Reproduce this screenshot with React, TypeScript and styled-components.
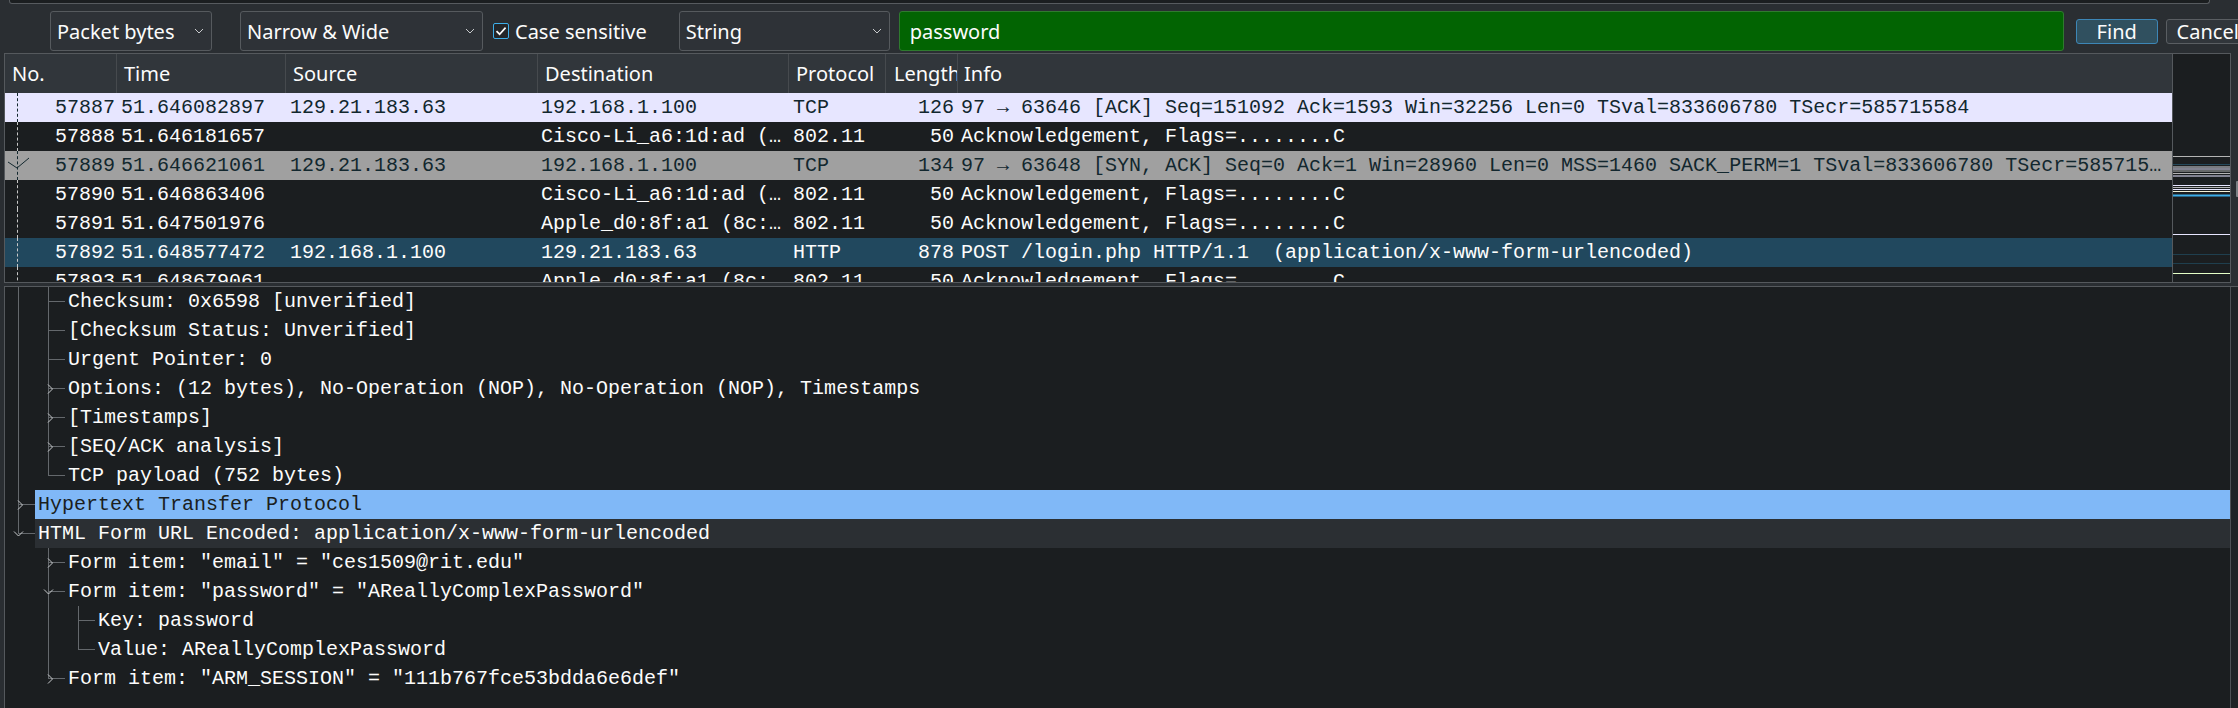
import React from 'react';
import styled, { createGlobalStyle } from 'styled-components';

const UI = `"Noto Sans", "Open Sans", sans-serif`;
const MONO = `"Liberation Mono", "DejaVu Sans Mono", monospace`;

const Global = createGlobalStyle`
  *, *::before, *::after { box-sizing: border-box; }
  html, body { margin: 0; padding: 0; background: #2a2e32; }
  body { width: 2238px; height: 708px; overflow: hidden; }
`;

const Window = styled.div`
  width: 2238px;
  height: 708px;
  overflow: hidden;
  background: #2a2e32;
  display: flex;
  flex-direction: column;
  font-family: ${UI};
  color: #fcfcfc;
`;

const FilterStub = styled.div`
  flex: none;
  height: 4px;
  margin: 0 28px 0 9px;
  background: #1b1e20;
  border: 1px solid #575b5f;
  border-top: none;
  border-radius: 0 0 3px 3px;
`;

const Toolbar = styled.div`
  flex: none;
  height: 49px;
  padding: 7px 0 2px;
  display: flex;
  align-items: center;
  white-space: nowrap;
`;

const Combo = styled.div<{ $w: number; $ml: number }>`
  flex: none;
  width: ${p => p.$w}px;
  margin-left: ${p => p.$ml}px;
  height: 40px;
  border: 1px solid #565a5e;
  border-radius: 3px;
  background: #2e3237;
  display: flex;
  align-items: center;
  padding-left: 6px;
  font-size: 20px;
`;

const ComboArrow = styled.svg`
  margin-left: auto;
  margin-right: 7px;
  width: 10px;
  height: 6px;
`;

const CheckBox = styled.div`
  flex: none;
  margin-left: 10px;
  width: 16px;
  height: 16px;
  border: 1px solid #3daee9;
  border-radius: 2px;
  background: #232629;
  display: flex;
  align-items: center;
  justify-content: center;
`;

const CheckLabel = styled.span`
  margin-left: 6px;
  font-size: 20px;
`;

const SearchField = styled.div`
  flex: none;
  width: 1165px;
  margin-left: 9px;
  height: 40px;
  background: #026402;
  border: 1px solid #2f7a2f;
  border-radius: 3px;
  padding-left: 10px;
  display: flex;
  align-items: center;
  font-size: 20px;
`;

const Button = styled.div<{ $w: number; $ml: number; $primary?: boolean }>`
  flex: none;
  width: ${p => p.$w}px;
  margin-left: ${p => p.$ml}px;
  height: 25px;
  line-height: 23px;
  font-size: 20px;
  text-align: center;
  border-radius: 3px;
  border: 1px solid ${p => (p.$primary ? '#3d86b6' : '#5a5e62')};
  background: ${p => (p.$primary ? '#30505f' : '#31363b')};
`;

const ListArea = styled.div`
  flex: none;
  display: flex;
  height: 230px;
  padding-left: 4px;
`;

const ListPane = styled.div`
  flex: 1;
  min-width: 0;
  display: flex;
  border: 1px solid #55595d;
  background: #1b1e20;
`;

const VScroll = styled.div`
  flex: none;
  width: 7px;
  padding: 128px 0 0 5px;
`;

const VHandle = styled.div`
  width: 2px;
  height: 16px;
  background: #7c8084;
  border-radius: 1px 0 0 1px;
`;

const Table = styled.div`
  flex: 1;
  min-width: 0;
  display: flex;
  flex-direction: column;
  overflow: hidden;
`;

const HeaderRow = styled.div`
  flex: none;
  height: 39px;
  display: flex;
  background: #31363b;
`;

const HeaderCell = styled.div<{ $w?: number; $pl?: number }>`
  ${p => (p.$w ? `width: ${p.$w}px; flex: none; border-right: 1px solid #464a4e;` : 'flex: 1;')}
  padding-left: ${p => p.$pl ?? 7}px;
  font-size: 20px;
  line-height: 39px;
  white-space: nowrap;
  overflow: hidden;
`;

const PacketRow = styled.div<{ $bg: string; $fg: string }>`
  flex: none;
  height: 29px;
  display: flex;
  background: ${p => p.$bg};
  color: ${p => p.$fg};
  font-family: ${MONO};
  font-size: 20px;
  line-height: 29px;
`;

const Cell = styled.div<{ $w?: number; $right?: boolean; $pl?: number; $pr?: number }>`
  ${p => (p.$w ? `width: ${p.$w}px; flex: none;` : 'flex: 1; min-width: 0;')}
  padding: 0 ${p => p.$pr ?? 4}px 0 ${p => p.$pl ?? 4}px;
  text-align: ${p => (p.$right ? 'right' : 'left')};
  white-space: pre;
  overflow: hidden;
  text-overflow: ellipsis;
  position: relative;
`;

const Related = styled.span<{ $c: string }>`
  position: absolute;
  left: 12px;
  top: 0;
  bottom: 0;
  border-left: 1px dashed ${p => p.$c};
`;

const AckMark = styled.svg`
  position: absolute;
  left: 2px;
  top: 5px;
  width: 24px;
  height: 16px;
`;

const Minimap = styled.div`
  flex: none;
  width: 58px;
  border-left: 1px solid #55595d;
  background: #1b1e20;
`;

const DetailPane = styled.div`
  flex: 1;
  min-height: 0;
  margin: 3px 0 0 4px;
  display: flex;
  border-top: 1px solid #55595d;
  border-left: 1px solid #55595d;
  background: #1b1e20;
`;

const DetailBody = styled.div`
  flex: 1;
  min-width: 0;
  display: flex;
  flex-direction: column;
  overflow: hidden;
`;

const DetailScroll = styled.div`
  flex: none;
  width: 8px;
  border-left: 1px solid #4d5155;
  background: #1f2326;
`;

const TreeRow = styled.div`
  flex: none;
  height: 29px;
  display: flex;
  font-family: ${MONO};
  font-size: 20px;
  line-height: 29px;
`;

const Guide = styled.div<{ $on: boolean }>`
  flex: none;
  width: 30px;
  position: relative;
  &::before {
    content: '';
    display: ${p => (p.$on ? 'block' : 'none')};
    position: absolute;
    left: 13px;
    top: 0;
    bottom: 0;
    border-left: 1px solid #64686c;
  }
`;

const Branch = styled.div<{ $last: boolean }>`
  flex: none;
  width: 30px;
  position: relative;
  &::before {
    content: '';
    position: absolute;
    left: 13px;
    top: 0;
    height: ${p => (p.$last ? '15px' : '29px')};
    border-left: 1px solid #64686c;
  }
  &::after {
    content: '';
    position: absolute;
    left: 13px;
    right: 0;
    top: 14px;
    border-top: 1px solid #64686c;
  }
`;

const Expander = styled.svg<{ $open: boolean }>`
  position: absolute;
  z-index: 1;
  left: ${p => (p.$open ? '8px' : '12px')};
  top: ${p => (p.$open ? '12px' : '10px')};
  width: ${p => (p.$open ? '11px' : '7px')};
  height: ${p => (p.$open ? '6px' : '10px')};
`;

const Label = styled.div<{ $bg: string; $fg: string }>`
  flex: 1;
  min-width: 0;
  padding-left: 3px;
  background: ${p => p.$bg};
  color: ${p => p.$fg};
  white-space: pre;
  overflow: hidden;
`;

const COLS = [112, 169, 252, 251, 97, 72];

type Packet = {
  no: string;
  time: string;
  src: string;
  dst: string;
  proto: string;
  len: string;
  info: string;
  bg: string;
  fg: string;
  rel: string;
  ack?: boolean;
};

const LIGHT = '#fcfcfc';
const DARK = '#12272e';
const CISCO = 'Cisco-Li_a6:1d:ad (c0:c1:c0:a6:1d:ad) (RA)';
const APPLE = 'Apple_d0:8f:a1 (8c:85:90:d0:8f:a1) (RA)';
const ACKI = 'Acknowledgement, Flags=........C';

const packets: Packet[] = [
  { no: '57887', time: '51.646082897', src: '129.21.183.63', dst: '192.168.1.100', proto: 'TCP', len: '126', info: '97 → 63646 [ACK] Seq=151092 Ack=1593 Win=32256 Len=0 TSval=833606780 TSecr=585715584', bg: '#e7e6ff', fg: DARK, rel: DARK },
  { no: '57888', time: '51.646181657', src: '', dst: CISCO, proto: '802.11', len: '50', info: ACKI, bg: '#1b1e20', fg: LIGHT, rel: '#c8c8c8' },
  { no: '57889', time: '51.646621061', src: '129.21.183.63', dst: '192.168.1.100', proto: 'TCP', len: '134', info: '97 → 63648 [SYN, ACK] Seq=0 Ack=1 Win=28960 Len=0 MSS=1460 SACK_PERM=1 TSval=833606780 TSecr=585715584 WS=128', bg: '#a0a0a0', fg: DARK, rel: DARK, ack: true },
  { no: '57890', time: '51.646863406', src: '', dst: CISCO, proto: '802.11', len: '50', info: ACKI, bg: '#1b1e20', fg: LIGHT, rel: '#c8c8c8' },
  { no: '57891', time: '51.647501976', src: '', dst: APPLE, proto: '802.11', len: '50', info: ACKI, bg: '#1b1e20', fg: LIGHT, rel: '#c8c8c8' },
  { no: '57892', time: '51.648577472', src: '192.168.1.100', dst: '129.21.183.63', proto: 'HTTP', len: '878', info: 'POST /login.php HTTP/1.1  (application/x-www-form-urlencoded)', bg: '#21485e', fg: LIGHT, rel: '#c8c8c8' },
  { no: '57893', time: '51.648679061', src: '', dst: APPLE, proto: '802.11', len: '50', info: ACKI, bg: '#1b1e20', fg: LIGHT, rel: '#c8c8c8' },
];

type TreeNode = {
  text: string;
  guides: boolean[];
  last: boolean;
  exp?: 'open' | 'closed';
  state?: 'sel' | 'hover';
};

const tree: TreeNode[] = [
  { text: 'Checksum: 0x6598 [unverified]', guides: [true], last: false },
  { text: '[Checksum Status: Unverified]', guides: [true], last: false },
  { text: 'Urgent Pointer: 0', guides: [true], last: false },
  { text: 'Options: (12 bytes), No-Operation (NOP), No-Operation (NOP), Timestamps', guides: [true], last: false, exp: 'closed' },
  { text: '[Timestamps]', guides: [true], last: false, exp: 'closed' },
  { text: '[SEQ/ACK analysis]', guides: [true], last: false, exp: 'closed' },
  { text: 'TCP payload (752 bytes)', guides: [true], last: true },
  { text: 'Hypertext Transfer Protocol', guides: [], last: false, exp: 'closed', state: 'sel' },
  { text: 'HTML Form URL Encoded: application/x-www-form-urlencoded', guides: [], last: true, exp: 'open', state: 'hover' },
  { text: 'Form item: "email" = "ces1509@rit.edu"', guides: [false], last: false, exp: 'closed' },
  { text: 'Form item: "password" = "AReallyComplexPassword"', guides: [false], last: false, exp: 'open' },
  { text: 'Key: password', guides: [false, true], last: false },
  { text: 'Value: AReallyComplexPassword', guides: [false, true], last: true },
  { text: 'Form item: "ARM_SESSION" = "111b767fce53bdda6e6def"', guides: [false], last: true, exp: 'closed' },
];

const marks: { y: number; c: string; h?: number }[] = [
  { y: 102, c: '#b4b4b4' },
  { y: 110, c: '#24485a' },
  { y: 112.5, c: '#d8d8e0' },
  { y: 114.5, c: '#e7e6ff' },
  { y: 116.5, c: '#b4b4b4' },
  { y: 119, c: '#b4b4b4' },
  { y: 121.5, c: '#e7e6ff' },
  { y: 131, c: '#e7e6ff' },
  { y: 133, c: '#b4b4b4' },
  { y: 135, c: '#e7e6ff' },
  { y: 137, c: '#f0f0d8' },
  { y: 140.5, c: '#3daee9', h: 2 },
  { y: 180, c: '#e7e6ff' },
  { y: 200, c: '#1f3f4e' },
  { y: 209, c: '#1f3f4e' },
  { y: 219, c: '#e4ffc7' },
];

function Chevron() {
  return (
    <ComboArrow viewBox="0 0 10 6">
      <path d="M1 1 L5 5 L9 1" fill="none" stroke="#c8cacc" strokeWidth="1" />
    </ComboArrow>
  );
}

export default function App() {
  return (
    <Window>
      <Global />
      <FilterStub />
      <Toolbar>
        <Combo $w={162} $ml={50}>
          Packet bytes
          <Chevron />
        </Combo>
        <Combo $w={243} $ml={28}>
          Narrow &amp; Wide
          <Chevron />
        </Combo>
        <CheckBox>
          <svg width="12" height="12" viewBox="0 0 12 12">
            <path d="M1.5 6.2 L4.6 9.2 L10.6 2.6" fill="none" stroke="#fcfcfc" strokeWidth="1.7" />
          </svg>
        </CheckBox>
        <CheckLabel>Case sensitive</CheckLabel>
        <Combo $w={211} $ml={32}>
          String
          <Chevron />
        </Combo>
        <SearchField>password</SearchField>
        <Button $w={82} $ml={12} $primary>
          Find
        </Button>
        <Button $w={84} $ml={8}>
          Cancel
        </Button>
      </Toolbar>

      <ListArea>
        <ListPane>
          <Table>
            <HeaderRow>
              <HeaderCell $w={COLS[0]}>No.</HeaderCell>
              <HeaderCell $w={COLS[1]}>Time</HeaderCell>
              <HeaderCell $w={COLS[2]}>Source</HeaderCell>
              <HeaderCell $w={COLS[3]}>Destination</HeaderCell>
              <HeaderCell $w={COLS[4]}>Protocol</HeaderCell>
              <HeaderCell $w={COLS[5]} $pl={8}>Length</HeaderCell>
              <HeaderCell $pl={6}>Info</HeaderCell>
            </HeaderRow>
            {packets.map(p => (
              <PacketRow key={p.no} $bg={p.bg} $fg={p.fg}>
                <Cell $w={COLS[0]} $right $pr={2}>
                  <Related $c={p.rel} />
                  {p.ack && (
                    <AckMark viewBox="0 0 24 16">
                      <path d="M1 6 L10 12 L22 2" fill="none" stroke={p.rel} strokeWidth="1" />
                    </AckMark>
                  )}
                  {p.no}
                </Cell>
                <Cell $w={COLS[1]}>{p.time}</Cell>
                <Cell $w={COLS[2]}>{p.src}</Cell>
                <Cell $w={COLS[3]} $pl={3}>{p.dst}</Cell>
                <Cell $w={COLS[4]}>{p.proto}</Cell>
                <Cell $w={COLS[5]} $right>{p.len}</Cell>
                <Cell $pl={3}>{p.info}</Cell>
              </PacketRow>
            ))}
          </Table>
          <Minimap>
            <svg width="57" height="228" viewBox="0 0 57 228">
              {marks.map((m, i) => (
                <rect key={i} x="0" y={m.y} width="57" height={m.h ?? 1} fill={m.c} />
              ))}
            </svg>
          </Minimap>
        </ListPane>
        <VScroll>
          <VHandle />
        </VScroll>
      </ListArea>

      <DetailPane>
        <DetailBody>
          {tree.map((n, i) => (
            <TreeRow key={i}>
              {n.guides.map((g, j) => (
                <Guide key={j} $on={g} />
              ))}
              <Branch $last={n.last}>
                {n.exp && (
                  <Expander
                    $open={n.exp === 'open'}
                    viewBox={n.exp === 'open' ? '0 0 11 6' : '0 0 7 10'}
                  >
                    <path
                      d={n.exp === 'open' ? 'M1 0.5 L5.5 5 L10 0.5' : 'M1 0.5 L5.5 5 L1 9.5'}
                      fill="none"
                      stroke="#c6c8ca"
                      strokeWidth="1"
                    />
                  </Expander>
                )}
              </Branch>
              <Label
                $bg={n.state === 'sel' ? '#80b8f7' : n.state === 'hover' ? '#2b2f33' : 'transparent'}
                $fg={n.state === 'sel' ? '#1b1e20' : '#fcfcfc'}
              >
                {n.text}
              </Label>
            </TreeRow>
          ))}
        </DetailBody>
        <DetailScroll />
      </DetailPane>
    </Window>
  );
}
